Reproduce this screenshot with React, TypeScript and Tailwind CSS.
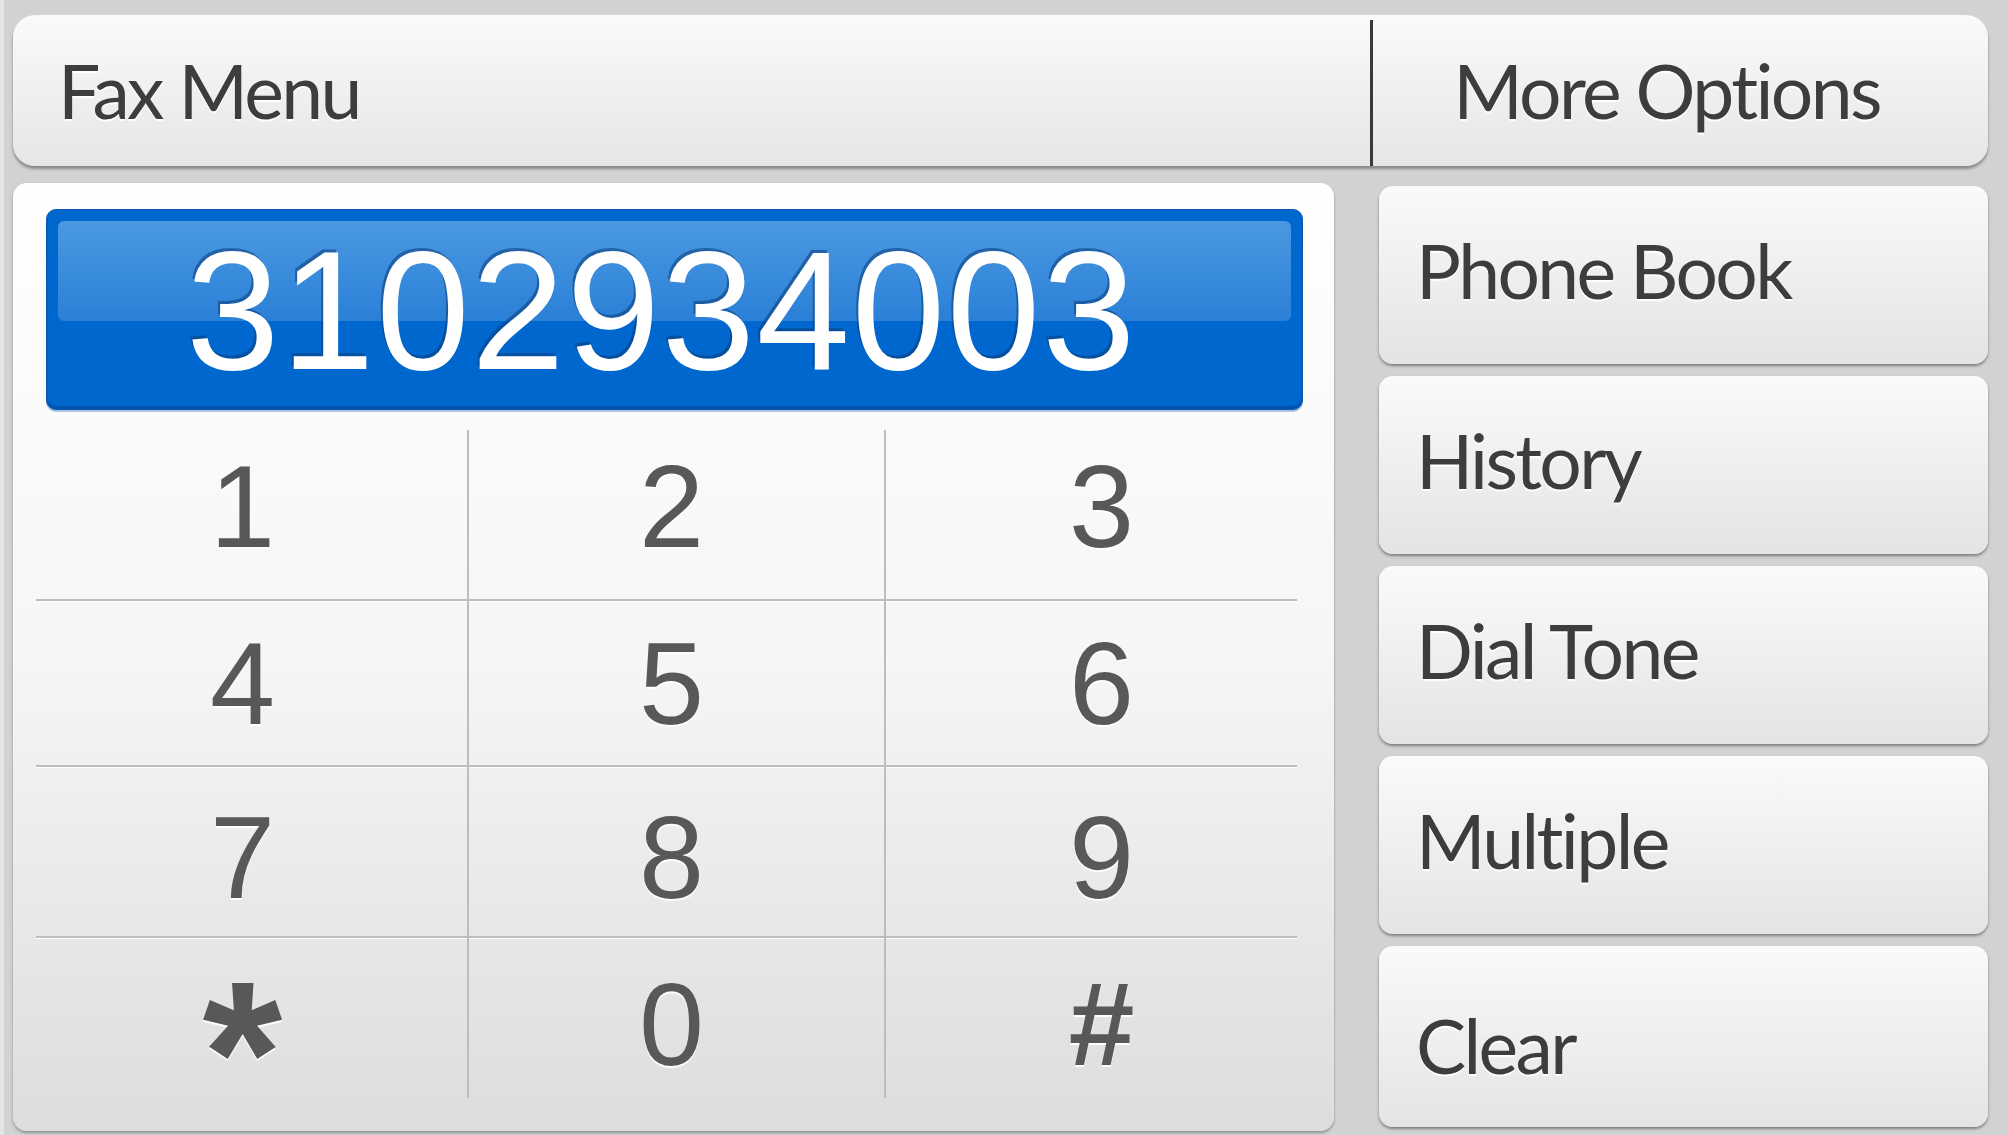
import React from 'react';

const keys = ['1', '2', '3', '4', '5', '6', '7', '8', '9', '*', '0', '#'];
const options = ['Phone Book', 'History', 'Dial Tone', 'Multiple', 'Clear'];

// small nudges so the digits sit where the original artwork puts them
const rowPad = ['pb-[16px]', '', 'pt-[12px]', 'pt-[12px]'];
const colPad = ['pr-[18px]', 'pr-[10px]', 'pl-[20px]'];

const label =
  "font-['Lato','Open_Sans',sans-serif] text-[75px] text-[#3d3d3d] tracking-[-0.035em] [text-shadow:0_2px_1px_#ffffff]";

export default function App() {
  return (
    <div className="w-[2007px] h-[1135px] overflow-hidden bg-[#d1d2d4] border-l-[4px] border-[#e4e5e6] pl-[9px] pr-[19px] pt-[15px] flex flex-col">
      {/* Top bar */}
      <div className="h-[151px] flex rounded-[22px] bg-gradient-to-b from-[#fafafa] to-[#e5e6e7] shadow-[0_3px_3px_rgba(0,0,0,0.35)]">
        <div className="w-[1357px] flex items-center pl-[45px]">
          <span className={label}>Fax Menu</span>
        </div>
        <div className="w-[3px] mt-[5px] bg-[#3a3a3a]" />
        <div className="flex-1 flex items-center justify-center pr-[28px]">
          <span className={label}>More Options</span>
        </div>
      </div>

      <div className="flex gap-[45px] mt-[17px] flex-1 pb-[4px]">
        {/* Dial pad panel */}
        <div className="w-[1321px] rounded-[14px] bg-gradient-to-b from-[#ffffff] via-[#f5f6f6] to-[#dcdddf] shadow-[0_2px_3px_rgba(0,0,0,0.3)] pt-[26px] flex flex-col">
          <div className="ml-[33px] mr-[31px] h-[201px] rounded-[10px] bg-[#0067cf] border border-[#0a59ad] shadow-[inset_0_-3px_2px_rgba(0,40,100,0.35),0_2px_0_rgba(120,160,210,0.6)] p-[11px] relative">
            <div className="h-[100px] rounded-[6px] bg-gradient-to-b from-[#4a98e1] to-[#2a80d7]" />
            <div className="absolute inset-0 flex items-center justify-center pr-[26px] pt-[2px]">
              <span className="font-['Liberation_Sans','Arial',sans-serif] text-[168px] leading-none text-white tracking-[0.01em] [text-shadow:-2px_-3px_0_rgba(10,60,120,0.55)]">
                3102934003
              </span>
            </div>
          </div>

          <div className="mt-[20px] ml-[23px] grid grid-cols-[431px_417px_413px] grid-rows-[169px_166px_171px_162px]">
            {keys.map((k, i) => {
              const row = Math.floor(i / 3);
              const col = i % 3;
              return (
                <div
                  key={k}
                  className={`flex items-center justify-center ${rowPad[row]} ${colPad[col]} ${
                    col !== 0 ? 'border-l-2 border-l-[#bdbdbd]' : ''
                  } ${row > 0 ? 'border-t-2 border-t-[#bdbdbd] shadow-[inset_0_1px_0_#ffffff]' : ''}`}
                >
                  <span
                    className={`font-['Liberation_Sans','Arial',sans-serif] text-[#585858] [text-shadow:0_2px_1px_#ffffff] ${
                      k === '*'
                        ? 'text-[205px] leading-[0.5] font-bold mt-[58px]'
                        : k === '#'
                          ? 'text-[118px] leading-none font-bold'
                          : 'text-[117px] leading-none'
                    }`}
                  >
                    {k}
                  </span>
                </div>
              );
            })}
          </div>
        </div>

        {/* Right option buttons */}
        <div className="flex-1 flex flex-col gap-[12px] pt-[3px]">
          {options.map((o, i) => (
            <div
              key={o}
              className={`${i === 4 ? 'h-[181px] pt-[28px]' : 'h-[178px]'} rounded-[14px] bg-gradient-to-b from-[#fafafa] to-[#e3e4e5] shadow-[0_2px_3px_rgba(0,0,0,0.4)] flex items-center pl-[37px] pb-[10px]`}
            >
              <span className={label}>{o}</span>
            </div>
          ))}
        </div>
      </div>
    </div>
  );
}
